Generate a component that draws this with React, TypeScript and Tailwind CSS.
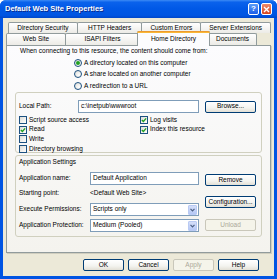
import React from "react";

function Check({ checked }: { checked?: boolean }) {
  return (
    <span className="w-[8px] h-[8px] shrink-0 border border-[#1C5180] bg-[linear-gradient(135deg,#DCDCD7,#FFFFFF)] flex items-center justify-center">
      {checked && (
        <svg width="6" height="6" viewBox="0 0 7 7">
          <path d="M1 3.4 L2.8 5.3 L6 1.6" stroke="#21A121" strokeWidth="1.6" fill="none" />
        </svg>
      )}
    </span>
  );
}

function Radio({ checked }: { checked?: boolean }) {
  return (
    <span className="w-[8px] h-[8px] shrink-0 rounded-full border border-[#1C5180] bg-[radial-gradient(circle_at_70%_70%,#FFFFFF,#DCDCD7)] flex items-center justify-center">
      {checked && <span className="w-[4px] h-[4px] rounded-full bg-[#21A121]" />}
    </span>
  );
}

function Btn({ children, disabled, className }: { children: React.ReactNode; disabled?: boolean; className: string }) {
  return (
    <div
      className={`${className} flex items-center justify-center rounded-[2px] border ${
        disabled
          ? "border-[#C9C7BA] bg-[#F5F4EA] text-[#ACA899]"
          : "border-[#003C74] bg-[linear-gradient(to_bottom,#FFFFFF,#F3F3EF_60%,#E2DFD5)] text-black"
      }`}
    >
      {children}
    </div>
  );
}

function Select({ value }: { value: string }) {
  return (
    <div className="w-[109px] h-[13px] border border-[#7F9DB9] bg-white flex items-center pl-[2px] pr-[1px]">
      <span className="flex-1">{value}</span>
      <span className="w-[9px] h-[10px] rounded-[1px] border border-[#B9CAF3] bg-[linear-gradient(to_bottom,#D4DEF9,#B6C8F5)] flex items-center justify-center">
        <svg width="5" height="4" viewBox="0 0 5 4">
          <path d="M0.5 0.8 L2.5 2.8 L4.5 0.8" stroke="#4D6185" strokeWidth="1.2" fill="none" />
        </svg>
      </span>
    </div>
  );
}

function Tab({ label, className }: { label: string; className: string }) {
  return (
    <div
      className={`${className} h-full border border-b-0 border-[#919B9C] rounded-t-[2px] bg-[linear-gradient(to_bottom,#FFFFFF,#ECEBE6)] flex items-center justify-center`}
    >
      {label}
    </div>
  );
}

export default function App() {
  return (
    <div className="w-[277px] h-[279px] flex flex-col bg-[#0054E3] rounded-t-[6px] overflow-hidden font-['Liberation_Sans',Arial,sans-serif] text-[6.5px] leading-none text-black">
      {/* title bar */}
      <div className="h-[18px] shrink-0 flex items-center pl-[5px] pr-[5px] bg-[linear-gradient(to_bottom,#3D8BF5_0%,#0A62EC_12%,#0058E6_50%,#0055E2_85%,#0047CA_100%)]">
        <span className="flex-1 text-white font-bold text-[7.5px] [text-shadow:1px_1px_0_#0A2A8A]">
          Default Web Site Properties
        </span>
        <div className="w-[11px] h-[12px] rounded-[2px] border border-white bg-[linear-gradient(to_bottom,#5A9CF8,#1D5EE8)] flex items-center justify-center text-white font-bold text-[8px]">
          ?
        </div>
        <div className="ml-[2px] w-[11px] h-[12px] rounded-[2px] border border-white bg-[linear-gradient(to_bottom,#EB8A6C,#D8461F)] flex items-center justify-center">
          <svg width="7" height="7" viewBox="0 0 7 7">
            <path d="M1 1 L6 6 M6 1 L1 6" stroke="#FFFFFF" strokeWidth="1.4" />
          </svg>
        </div>
      </div>

      {/* body */}
      <div className="flex-1 mx-[3px] mb-[3px] bg-[#ECE9D8] flex flex-col px-[3px] pt-[4px]">
        {/* tabs */}
        <div className="h-[23px] shrink-0 flex flex-col">
          <div className="h-[11px] flex pl-[2px]">
            <Tab label="Directory Security" className="w-[70px]" />
            <Tab label="HTTP Headers" className="w-[66px] -ml-[1px]" />
            <Tab label="Custom Errors" className="w-[60px] -ml-[1px]" />
            <Tab label="Server Extensions" className="w-[71px] -ml-[1px]" />
          </div>
          <div className="h-[12px] flex items-end">
            <Tab label="Web Site" className="w-[60px]" />
            <Tab label="ISAPI Filters" className="w-[75px] -ml-[1px]" />
            <div className="relative z-10 w-[73px] h-[15px] -mb-[1px] -ml-[3px] -mr-[2px] border border-b-0 border-[#919B9C] rounded-t-[2px] bg-[#FCFCFE] flex flex-col">
              <div className="h-[2px] -mx-[1px] -mt-[1px] rounded-t-[2px] bg-[linear-gradient(to_bottom,#E68B2C,#FFC73C)]" />
              <div className="flex-1 flex items-center justify-center">Home Directory</div>
            </div>
            <Tab label="Documents" className="w-[49px]" />
          </div>
        </div>

        {/* panel */}
        <div className="h-[208px] shrink-0 border border-[#919B9C] shadow-[1px_1px_0_#D0CEBF] bg-[linear-gradient(to_bottom,#FCFCFE,#F4F3EE)] flex flex-col pl-[8px] pr-[8px]">
          <div className="h-[11px] flex items-center pl-[5px]">
            When connecting to this resource, the content should come from:
          </div>
          <div className="flex flex-col pl-[59px]">
            <div className="h-[11.5px] flex items-center gap-[2px]">
              <Radio checked />
              <span>A directory located on this computer</span>
            </div>
            <div className="h-[11.5px] flex items-center gap-[2px]">
              <Radio />
              <span>A share located on another computer</span>
            </div>
            <div className="h-[11.5px] flex items-center gap-[2px]">
              <Radio />
              <span>A redirection to a URL</span>
            </div>
          </div>

          {/* group 1 */}
          <div className="mt-[0.5px] h-[61px] shrink-0 border border-[#D0D0BF] rounded-[3px] flex flex-col px-[3px] pt-[7px]">
            <div className="h-[13px] flex items-center">
              <span className="w-[59px]">Local Path:</span>
              <div className="w-[121px] h-[13px] border border-[#7F9DB9] bg-white flex items-center pl-[2px]">
                c:\inetpub\wwwroot
              </div>
              <Btn className="ml-[6px] w-[51px] h-[12px]">Browse...</Btn>
            </div>
            <div className="flex mt-[2px]">
              <div className="w-[121px] flex flex-col">
                <div className="h-[9.7px] flex items-center gap-[2px]">
                  <Check />
                  <span>Script source access</span>
                </div>
                <div className="h-[9.7px] flex items-center gap-[2px]">
                  <Check checked />
                  <span>Read</span>
                </div>
                <div className="h-[9.7px] flex items-center gap-[2px]">
                  <Check />
                  <span>Write</span>
                </div>
                <div className="h-[9.7px] flex items-center gap-[2px]">
                  <Check />
                  <span>Directory browsing</span>
                </div>
              </div>
              <div className="flex flex-col">
                <div className="h-[9.7px] flex items-center gap-[2px]">
                  <Check checked />
                  <span>Log visits</span>
                </div>
                <div className="h-[9.7px] flex items-center gap-[2px]">
                  <Check checked />
                  <span>Index this resource</span>
                </div>
              </div>
            </div>
          </div>

          {/* group 2 */}
          <div className="mt-[2px] h-[82px] shrink-0 border border-[#D0D0BF] rounded-[3px] flex px-[3px] pt-[2px]">
            <div className="w-[180px] flex flex-col">
              <div className="h-[9px] flex items-center">Application Settings</div>
              <div className="mt-[5px] h-[13px] flex items-center">
                <span className="w-[71px]">Application name:</span>
                <div className="w-[109px] h-[13px] border border-[#7F9DB9] bg-white flex items-center pl-[2px]">
                  Default Application
                </div>
              </div>
              <div className="mt-[1px] h-[14px] flex items-center">
                <span className="w-[71px]">Starting point:</span>
                <span>&lt;Default Web Site&gt;</span>
              </div>
              <div className="mt-[3px] h-[13px] flex items-center">
                <span className="w-[71px]">Execute Permissions:</span>
                <Select value="Scripts only" />
              </div>
              <div className="mt-[3px] h-[13px] flex items-center">
                <span className="w-[71px]">Application Protection:</span>
                <Select value="Medium (Pooled)" />
              </div>
            </div>
            <div className="ml-[6px] flex flex-col pt-[16px]">
              <Btn className="w-[51px] h-[12px]">Remove</Btn>
              <Btn className="mt-[10px] w-[51px] h-[12px]">Configuration...</Btn>
              <Btn disabled className="mt-[11px] w-[51px] h-[12px]">Unload</Btn>
            </div>
          </div>
        </div>

        {/* footer */}
        <div className="mt-[6px] flex justify-end gap-[4px] pr-[12px]">
          <Btn className="w-[41px] h-[12px]">OK</Btn>
          <Btn className="w-[41px] h-[12px]">Cancel</Btn>
          <Btn disabled className="w-[41px] h-[12px]">Apply</Btn>
          <Btn className="w-[41px] h-[12px]">Help</Btn>
        </div>
      </div>
    </div>
  );
}
